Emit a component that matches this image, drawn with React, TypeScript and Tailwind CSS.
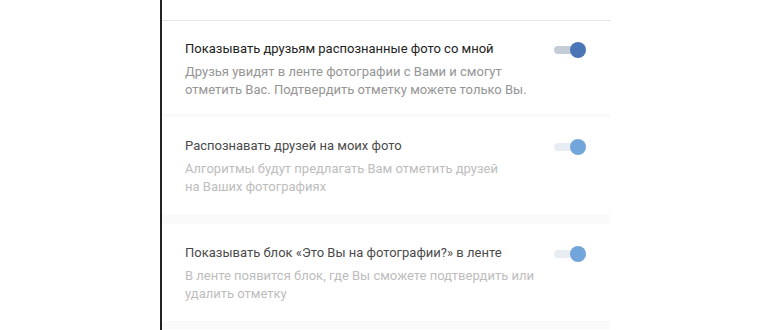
const rows = [
  {
    title: "Показывать друзьям распознанные фото со мной",
    desc: ["Друзья увидят в ленте фотографии с Вами и смогут", "отметить Вас. Подтвердить отметку можете только Вы."],
    active: true,
  },
  {
    title: "Распознавать друзей на моих фото",
    desc: ["Алгоритмы будут предлагать Вам отметить друзей", "на Ваших фотографиях"],
    active: false,
  },
  {
    title: "Показывать блок «Это Вы на фотографии?» в ленте",
    desc: ["В ленте появится блок, где Вы сможете подтвердить или", "удалить отметку"],
    active: false,
  },
];

const Toggle = ({ active }: { active: boolean }) => (
  <div className="relative w-[32px] h-[16px] mt-[2px] shrink-0">
    <div
      className={`absolute left-0 top-[4px] w-[26px] h-[8px] rounded-full ${
        active ? "bg-[#c4ccd6]" : "bg-[#e8edf3]"
      }`}
    />
    <div
      className={`absolute right-0 top-0 w-[16px] h-[16px] rounded-full ${
        active ? "bg-[#4a76b7]" : "bg-[#72a6db]"
      }`}
    />
  </div>
);

export default function App() {
  return (
    <div className="w-[770px] h-[330px] bg-white overflow-hidden" style={{ fontFamily: "Roboto, 'Noto Sans', sans-serif" }}>
      <div className="ml-[160px] w-[450px] h-full border-l-[2px] border-[#222222]">
        <div className="h-[21px] border-b border-[#e3e4e8]" />
        {rows.map((r, i) => (
          <div key={i}>
            {i > 0 && (
              <div className={i === 1 ? "h-[3px] bg-[#fafafa]" : "h-[10px] bg-[#fafafa]"} />
            )}
            <div className={`flex justify-between pl-[23px] pr-[24px] ${i === 0 ? "pt-[19px] h-[93px]" : "pt-[20px] h-[97px]"}`}>
              <div className="text-[13px] leading-[18px]">
                <div className={i === 0 ? "text-[#222222]" : "text-[#4a4a4a]"}>{r.title}</div>
                <div className={`mt-[5px] ${i === 0 ? "text-[#959595]" : "text-[#bdbdbd]"}`}>
                  {r.desc.map((d) => (
                    <div key={d}>{d}</div>
                  ))}
                </div>
              </div>
              <Toggle active={r.active} />
            </div>
          </div>
        ))}
        <div className="h-[8px] bg-[#fafafa]" />
      </div>
    </div>
  );
}
